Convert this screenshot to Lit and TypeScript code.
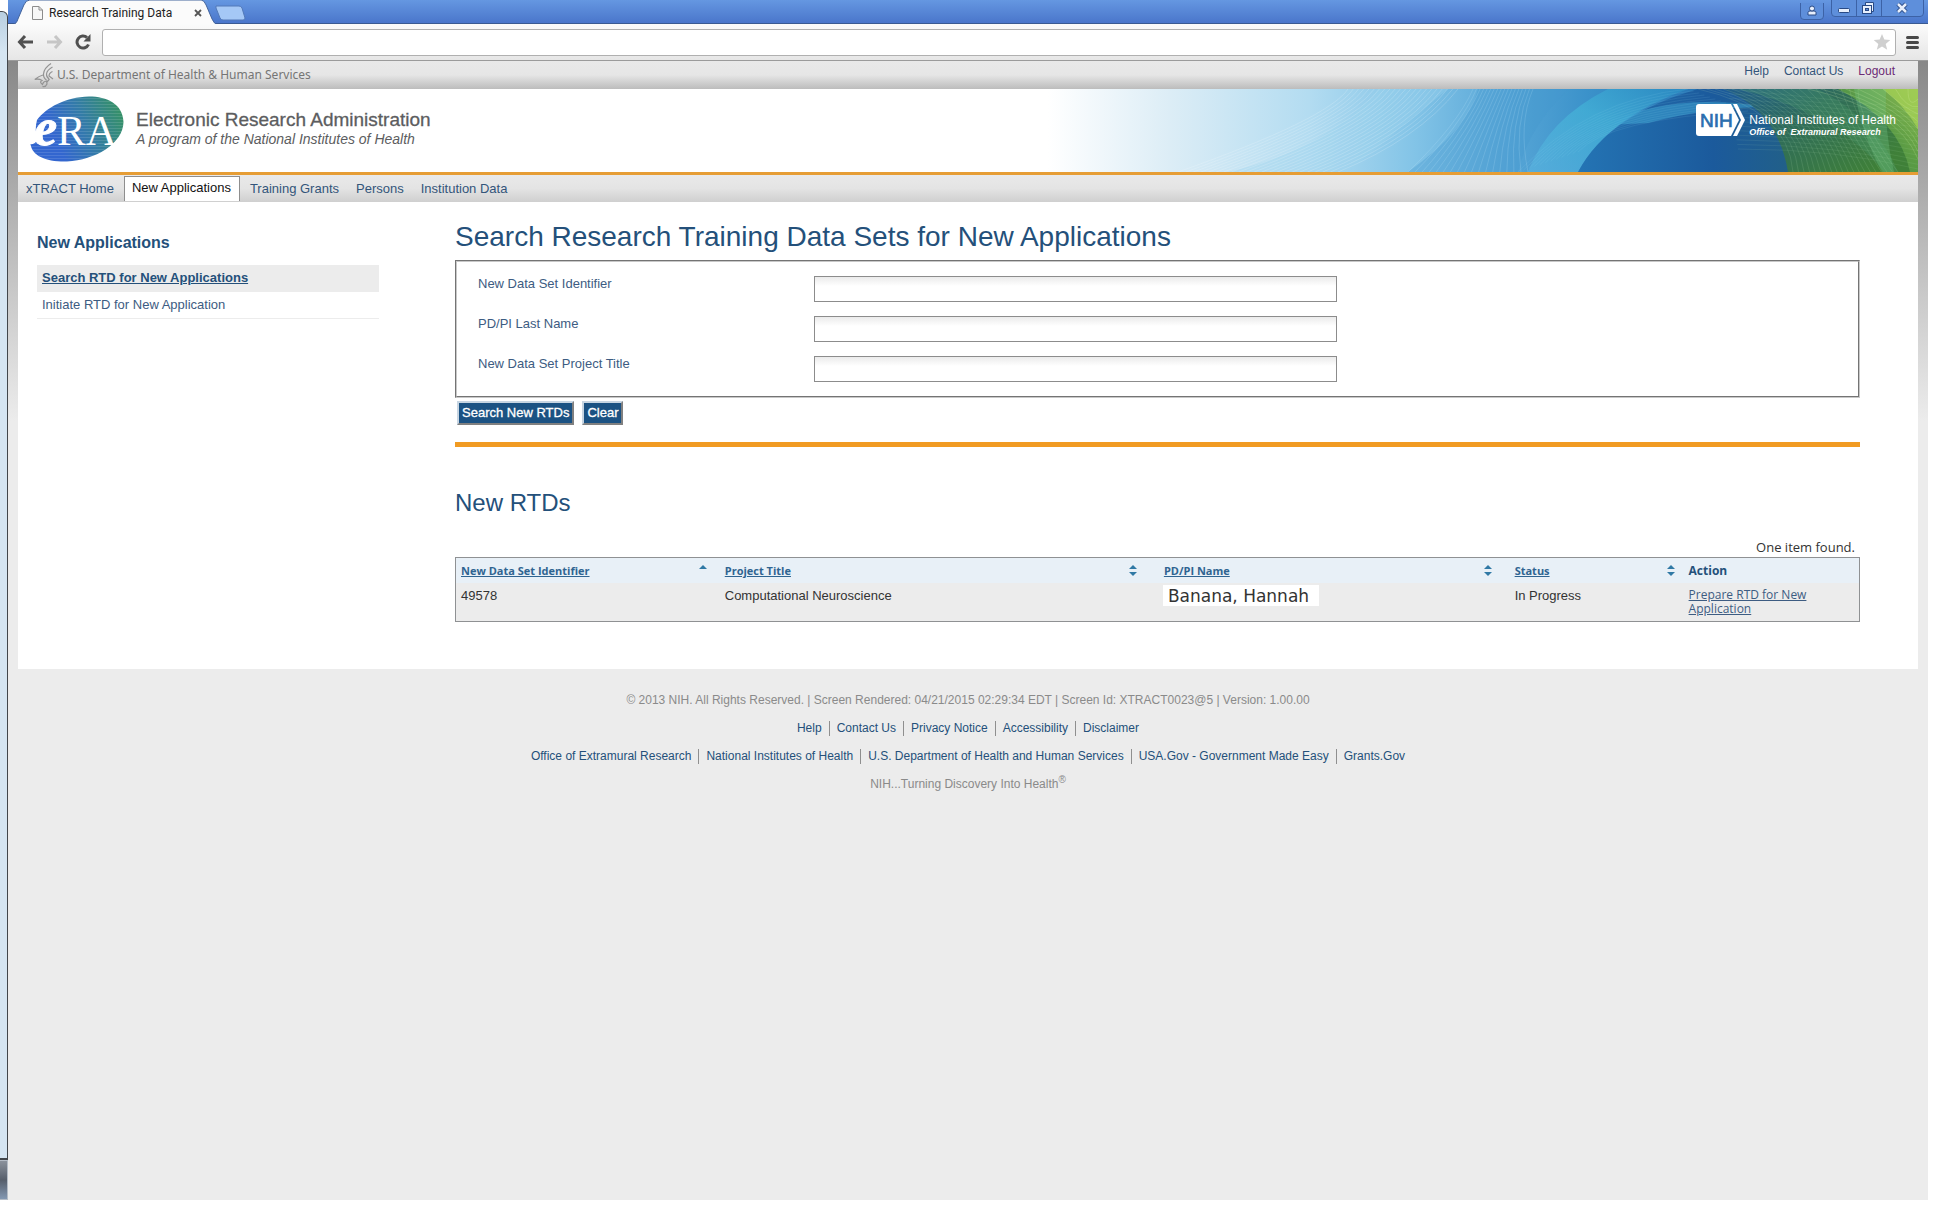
import { LitElement, html, svg, css } from "lit";
import { customElement } from "lit/decorators.js";

const sans = css`"Liberation Sans", Arial, sans-serif`;

@customElement("browser-bar")
class BrowserBar extends LitElement {
  static styles = css`
    :host { display: block; }
    button { border: 0; padding: 0; background: none; display: block; flex: none; }
    svg { display: block; }
    .strip {
      display: flex; justify-content: space-between; height: 24px; box-sizing: border-box;
      background: linear-gradient(#6597e1, #4a76cb); border-bottom: 1px solid #3a5a92;
      padding: 0 4px;
    }
    .tabs { display: flex; gap: 0; }
    .tab { position: relative; display: flex; align-items: center; width: 206px; height: 25px; box-sizing: border-box; padding: 0 16px 0 20px; z-index: 1; }
    .shape { position: absolute; inset: 0; z-index: -1; }
    .title { flex: 1; margin-left: 6px; font: 12px/16px Roboto, "Noto Sans", sans-serif; color: #222; white-space: nowrap; }
    .new { margin: 5px 0 0 -3px; align-self: flex-start; }
    .controls { display: flex; gap: 7px; }
    .tools {
      display: flex; align-items: center; height: 37px; box-sizing: border-box; padding: 0 9px;
      background: linear-gradient(#fbfbfb, #e6e6e6); border-bottom: 1px solid #9b9b9b;
    }
    .nav { display: flex; gap: 12px; margin-right: 10px; }
    .omni {
      flex: 1; display: flex; align-items: center; height: 27px; box-sizing: border-box;
      background: #fff; border: 1px solid #b0b0b0; border-radius: 3px; padding-right: 4px; margin-right: 10px;
    }
    .omni input { flex: 1; height: 23px; border: 0; outline: 0; background: none; padding: 0 6px; font: 14px ${sans}; }
  `;
  render() {
    return html`
      <div class="strip">
        <div class="tabs">
          <div class="tab">
            <svg class="shape" width="206" height="25" viewBox="0 0 208 25" preserveAspectRatio="none">
              <path d="M0 25C4 24 5 22 6 19L12 5Q14 0 18 0H191Q194 0 196 5L202 19Q204 24 208 25Z" fill="#fbfbfb" stroke="#42639b" stroke-width="1"/>
              <path d="M0 24.5H208" stroke="#fbfbfb"/>
            </svg>
            <svg width="11" height="14" viewBox="0 0 11 14"><path d="M.5.5H7L10.5 4V13.500H.5ZM7 .5V4H10.500" fill="#f7f7f7" stroke="#8c8c8c"/></svg>
            <span class="title">Research Training Data</span>
            <button aria-label="Close tab"><svg width="8" height="8" viewBox="0 0 8 8"><path d="M1 1L7 7M7 1L1 7" stroke="#555" stroke-width="1.800"/></svg></button>
          </div>
          <button class="new" aria-label="New tab"><svg width="31" height="16" viewBox="0 0 31 16"><path d="M1 1H24Q26 1 27 3L30 13Q30 15 28 15H8Q6 15 5 13L1 3Z" fill="#a5c8f6" stroke="#5279b8"/></svg></button>
        </div>
        <div class="controls">
          <button aria-label="Profile"><svg width="24" height="17" viewBox="0 0 24 17"><path d="M.5 0V13Q.5 16.500 4 16.500H20Q23.500 16.500 23.500 13V0" fill="#5e8fdb" stroke="#3c62a6"/><path d="M8 12V9.500Q8 8 10 8H14Q16 8 16 9.500V12Z" fill="#e7effc" stroke="#294a85"/><circle cx="12" cy="5.500" r="2.500" fill="#e7effc" stroke="#294a85"/></svg></button>
          <svg width="93" height="17" viewBox="0 0 93 17" role="img" aria-label="Minimize, restore, close">
            <path d="M.5 0V13Q.5 16.500 4 16.500H89Q92.500 16.500 92.500 13V0M25.500 0V16M50.500 0V16" fill="#5e8fdb" stroke="#3c62a6"/>
            <rect x="7.500" y="8.500" width="11" height="4" rx="1" fill="#e7effc" stroke="#294a85"/>
            <path d="M34.500 2.500H42.500V11.500H34.500Z" fill="#e7effc" stroke="#294a85"/><rect x="31.500" y="5.500" width="9" height="8" fill="#e7effc" stroke="#294a85"/><rect x="34.500" y="8.500" width="3" height="2" fill="#5e8fdb" stroke="#294a85"/>
            <path d="M67 4L75 12M75 4L67 12" stroke="#294a85" stroke-width="4.500"/><path d="M67 4L75 12M75 4L67 12" stroke="#e7effc" stroke-width="2.500"/>
          </svg>
        </div>
      </div>
      <div class="tools">
        <div class="nav">
          <button aria-label="Back"><svg width="17" height="16" viewBox="0 0 17 16"><path d="M8 2L2.500 8L8 14M3 8H16" fill="none" stroke="#505050" stroke-width="3"/></svg></button>
          <button aria-label="Forward"><svg width="17" height="16" viewBox="0 0 17 16"><path d="M9 2L14.500 8L9 14M14 8H1" fill="none" stroke="#c6c6c6" stroke-width="3"/></svg></button>
          <button aria-label="Reload"><svg width="17" height="16" viewBox="0 0 17 16"><path d="M13.500 10.500A6 6 0 1 1 12 3.500" fill="none" stroke="#505050" stroke-width="3"/><path d="M15.500 0V7.500H8.500Z" fill="#505050"/></svg></button>
        </div>
        <div class="omni">
          <input type="text" aria-label="Address">
          <button aria-label="Bookmark"><svg width="18" height="18" viewBox="0 0 18 18"><path d="M9 1L11.300 6.600L17.300 7L12.700 10.900L14.200 16.800L9 13.600L3.800 16.800L5.300 10.900L.7 7L6.700 6.600Z" fill="#cfcfcf"/></svg></button>
        </div>
        <button aria-label="Menu"><svg width="13" height="13" viewBox="0 0 13 13"><path d="M1.500 1.500H11.500M1.500 6.500H11.500M1.500 11.500H11.500" stroke="#484848" stroke-width="3" stroke-linecap="round"/></svg></button>
      </div>`;
  }
}

/** A fan of fine curves between two moving anchor points. */
function mesh(count: number, at: (t: number) => string, color: string, opacity: number) {
  return Array.from({ length: count }, (_, i) =>
    svg`<path d=${at(i / (count - 1))} fill="none" stroke=${color} stroke-opacity=${opacity} stroke-width=".7"/>`);
}

const OVAL = "M1.5 49C3 61 17 67 38 66.500C66 65 94 49 94.500 27C94 9 78 1.500 60 1.500C36 2 17 13 8 25Q5 36 9 44Q6 50 1.500 49Z";

@customElement("site-header")
class SiteHeader extends LitElement {
  static styles = css`
    :host { display: block; font-family: ${sans}; }
    svg { display: block; flex: none; }
    a { text-decoration: none; color: #33557a; }
    .hhs {
      display: flex; justify-content: space-between; height: 28px; box-sizing: border-box; padding: 0 23px 0 16px;
      background: linear-gradient(#e9e9e9, #e6e6e6 50%, #bcbcbc);
    }
    .dept { display: flex; align-items: center; gap: 3px; font: 12px/16px "Noto Sans", sans-serif; color: #757575; white-space: nowrap; }
    .links { display: flex; gap: 15px; font-size: 12px; line-height: 20px; }
    .links .out { color: #6b2b74; }
    .banner { position: relative; display: flex; justify-content: space-between; height: 83px; background: #fff; border-bottom: 3px solid #e69d35; overflow: hidden; }
    .art { position: absolute; right: 0; top: 0; }
    .brand { display: flex; gap: 11px; padding: 6px 0 0 11px; color: #5c5d60; white-space: nowrap; }
    .words { padding-top: 14px; }
    .name { font-size: 19px; line-height: 22px; -webkit-text-stroke: 0.3px; }
    .tag { font-size: 14px; line-height: 16px; font-style: italic; }
    .nih { position: relative; display: flex; gap: 4px; padding: 15px 22px 0 0; color: #fff; white-space: nowrap; }
    .nih .full { font-size: 12px; line-height: 14px; margin-top: 9px; }
    .nih .office { font-size: 9px; line-height: 10px; font-weight: bold; font-style: italic; }
    nav { display: flex; gap: 1px; height: 27px; background: linear-gradient(#e9e9e9, #e4e4e4 50%, #cfcfcf); font-size: 13px; }
    nav a { padding: 1px 8px 0; height: 26px; box-sizing: border-box; line-height: 25px; }
    nav .on { margin: 1px 1px 0; padding: 0 8px 0 7px; height: 25px; line-height: 22px; color: #111; background: #fff; border: 1px solid #8e8e8e; border-bottom: 0; }
  `;
  render() {
    return html`
      <div class="hhs">
        <div class="dept">
          <svg width="20" height="26" viewBox="0 0 20 26" fill="none" stroke="#939393" stroke-width="1.200">
            <path d="M17 1.500Q10 6 9.500 12Q9.300 16 12.500 18M18.500 5Q13 8 12.500 12Q12.300 15 15 17M18.500 9.500Q15 11 15 14L19 17"/>
            <path d="M9 13Q5 14 .8 17.500Q5 16.500 8 18.500Q5 20 8.500 22.500Q9 19.500 12.500 19L13 22Q11.500 25.500 8.500 24.500M15.500 17L13 20"/>
          </svg>
          <span>U.S. Department of Health &amp; Human Services</span>
        </div>
        <div class="links"><a href="#help">Help</a><a href="#contact">Contact Us</a><a class="out" href="#logout">Logout</a></div>
      </div>
      <div class="banner">
        <svg class="art" width="870" height="83" viewBox="0 0 870 83">
          <defs>
            <linearGradient id="base"><stop offset="0" stop-color="#fff"/><stop offset=".14" stop-color="#dcedf6"/><stop offset=".3" stop-color="#b3dcf1"/><stop offset=".42" stop-color="#83c4e7"/><stop offset=".52" stop-color="#5aa8d8"/><stop offset=".62" stop-color="#3b92ca"/><stop offset=".74" stop-color="#2877b6"/><stop offset="1" stop-color="#1d5f9a"/></linearGradient>
            <linearGradient id="deep"><stop offset="0" stop-color="#2474b4"/><stop offset=".5" stop-color="#1b5a9c"/><stop offset=".85" stop-color="#236184"/><stop offset="1" stop-color="#2d6b5c"/></linearGradient>
            <linearGradient id="green" x1="0" y1="0" x2="1" y2=".6"><stop offset="0" stop-color="#1f5c8c"/><stop offset=".45" stop-color="#2f6c5a"/><stop offset="1" stop-color="#3f8038"/></linearGradient>
            <linearGradient id="lime" x1="0" y1="1" x2="1" y2="0"><stop offset="0" stop-color="#468c50"/><stop offset=".55" stop-color="#5fa046"/><stop offset="1" stop-color="#9cc852"/></linearGradient>
            <linearGradient id="cyan" x1="0" y1="1" x2="1" y2="0"><stop offset="0" stop-color="#5ab4e0"/><stop offset=".55" stop-color="#45b9da"/><stop offset="1" stop-color="#2b93c8"/></linearGradient>
          </defs>
          <rect width="870" height="83" fill="url(#base)"/>
          <path d="M330 0H400Q350 40 300 83H180Q280 60 330 0Z" fill="#9fd3ee" opacity=".35"/>
          <path d="M430 0H520Q480 40 470 83H360Q420 40 430 0Z" fill="#4497cf" opacity=".35"/>
          <path d="M510 0H640Q560 28 530 83H480Q500 30 560 0Z" fill="url(#cyan)" opacity=".6"/>
          <path d="M530 83Q560 26 650 0H740L800 83Z" fill="url(#deep)"/>
          <path d="M560 36Q620 2 720 18Q660 18 600 34Z" fill="#3ea5d3" opacity=".5"/>
          <path d="M675 0Q730 22 740 83H870V0Z" fill="url(#green)"/>
          <path d="M690 0H770Q828 30 850 83H836Q790 24 690 0Z" fill="#4b9b6c" opacity=".3"/>
          <path d="M790 0H870V83H862Q852 32 790 0Z" fill="url(#lime)" opacity=".85"/>
          <path d="M835 0H870V40Q856 16 835 0Z" fill="#a5d155" opacity=".75"/>
          <path d="M806 0Q814 46 834 83H846Q836 40 838 0Z" fill="#77c98a" opacity=".3"/>
          ${mesh(22, (t) => `M${300 + t * 110} 0Q${280 + t * 90} ${30 + t * 20} ${130 + t * 160} 83`, "#fff", 0.25)}
          ${mesh(18, (t) => `M${425 + t * 60} 0Q${410 + t * 60} 35 ${360 + t * 120} 83`, "#cdefff", 0.25)}
          ${mesh(12, (t) => `M${470 + t * 60} ${83 - t * 20}Q${540 + t * 20} ${10 + t * 20} ${640 + t * 60} ${t * 22}`, "#9be4f5", 0.15)}
          ${mesh(20, (t) => `M${650 + t * 160} 0Q${740 + t * 70} ${20 + t * 10} ${745 + t * 105} 83`, "#c8f0c8", 0.18)}
          ${mesh(14, (t) => `M${680 + t * 10} ${t * 60}Q${780 + t * 10} ${10 + t * 50} 870 ${20 + t * 60}`, "#c8f0c8", 0.13)}
          ${mesh(9, (t) => `M${760 + t * 100} 0Q${850 + t * 10} 20 870 ${70 - t * 60}`, "#e8ffb8", 0.25)}
        </svg>
        <div class="brand">
          <svg width="96" height="70" viewBox="0 0 96 70" role="img" aria-label="eRA">
            <defs>
              <linearGradient id="oval" x1="0" y1=".3" x2="1" y2="0"><stop offset="0.150" stop-color="#3366cf"/><stop offset=".5" stop-color="#337ba8"/><stop offset="1" stop-color="#36955a"/></linearGradient>
              <pattern id="scan" width="4" height="3" patternUnits="userSpaceOnUse"><rect width="4" height="1" fill="#fff" opacity=".12"/></pattern>
            </defs>
            <path d=${OVAL} fill="url(#oval)"/>
            <path d=${OVAL} fill="url(#scan)"/>
            <text x="5" y="50" font-family="Liberation Serif, serif" fill="#fff"><tspan font-size="52" font-weight="bold" font-style="italic" stroke="#fff" stroke-width="1">e</tspan><tspan font-size="43">RA</tspan></text>
          </svg>
          <div class="words">
            <div class="name">Electronic Research Administration</div>
            <div class="tag">A program of the National Institutes of Health</div>
          </div>
        </div>
        <div class="nih">
          <svg width="49" height="32" viewBox="0 0 49 32" role="img" aria-label="NIH">
            <path d="M3 0H35L43 16L35 32H3Q0 32 0 29V3Q0 0 3 0Z" fill="#fff"/>
            <path d="M37 0H41L49 16L41 32H37L45 16Z" fill="#fff"/>
            <text x="4" y="23" font-family="Liberation Sans, sans-serif" font-size="19" fill="#2b6fae" stroke="#2b6fae" stroke-width=".7">NIH</text>
          </svg>
          <div>
            <div class="full">National Institutes of Health</div>
            <div class="office">Office of&nbsp; Extramural Research</div>
          </div>
        </div>
      </div>
      <nav>
        <a href="#home">xTRACT Home</a><a class="on" href="#new">New Applications</a><a href="#grants">Training Grants</a><a href="#persons">Persons</a><a href="#institution">Institution Data</a>
      </nav>`;
  }
}

const FIELDS = [
  ["identifier", "New Data Set Identifier"],
  ["lastname", "PD/PI Last Name"],
  ["title", "New Data Set Project Title"],
];

@customElement("search-page")
class SearchPage extends LitElement {
  static styles = css`
    :host {
      display: grid; grid-template-columns: minmax(0, 342fr) minmax(0, 1405fr); gap: 76px; background: #fff;
      padding: 18px 58px 47px 19px; font: 13px/16px ${sans}; color: #24507a;
    }
    h1, h2, h3 { margin: 0; font-weight: normal; color: #24507a; }
    a { color: #3d5c82; }
    aside h3 { font-size: 16px; font-weight: bold; line-height: 20px; margin: 13px 0 12px; }
    aside a { display: block; height: 26px; line-height: 26px; padding-left: 5px; text-decoration: none; border-bottom: 1px solid #ececec; color: #3d5c82; }
    aside .on { background: #ececec; font-weight: bold; text-decoration: underline; color: #24507a; }
    h1 { font-size: 28px; line-height: 34px; margin-bottom: 6px; }
    .box { display: grid; gap: 14px; border: 2px groove #c8c8c8; padding: 14px 0 14px 21px; }
    .field { display: grid; grid-template-columns: 336fr 523fr 521fr; height: 26px; }
    .field label { line-height: 16px; color: #3d5c82; }
    .field input {
      box-sizing: border-box; width: 100%; height: 26px; border: 1px solid #8c8c8c; border-radius: 0; outline: 0; padding: 2px 6px;
      font: 13px ${sans}; background: linear-gradient(#ebebeb, #fff 9px);
    }
    .actions { display: flex; gap: 8px; margin: 3px 2px 17px; }
    .actions button {
      height: 24px; box-sizing: border-box; padding: 0 3px; border: 2px solid; border-color: #c7d5e2 #808080 #808080 #c7d5e2;
      background: #1b5283; color: #fff; font: 13px/16px ${sans}; -webkit-text-stroke: 0.3px;
    }
    .rule { height: 5px; background: #f19b22; }
    h2 { font-size: 24px; line-height: 30px; margin-top: 41px; }
    .found { text-align: right; padding-right: 5px; margin: 21px 0 2px; font: 13px/16px "Open Sans", sans-serif; color: #333; }
    table { width: 100%; table-layout: fixed; border-collapse: separate; border-spacing: 0; border: 1px solid #8f9193; }
    col.a { width: 18.8%; } col.b { width: 31.3%; } col.c { width: 25%; } col.d { width: 12.4%; }
    th { padding: 5px 0 5px 5px; background: #e8f0f7; text-align: left; font: bold 12px/15px "Open Sans", sans-serif; }
    th div { display: flex; justify-content: space-between; align-items: center; padding-right: 5%; }
    th a { font-size: 11px; color: #2f6491; }
    th svg { display: block; }
    td { height: 38px; box-sizing: border-box; padding: 5px 0 4px 5px; vertical-align: top; background: #ececec; color: #333; }
    td.act { font: 12px/14px "Open Sans", sans-serif; padding-right: 30px; }
    td.who { padding-left: 4px; padding-top: 2px; }
    .name { display: inline-block; background: #fff; padding: 2px 10px 1px 5px; font: 17px/18px "DejaVu Sans", sans-serif; }
  `;
  private head(label: string, up: boolean, down: boolean) {
    return html`<th><div><a href="#sort">${label}</a><svg width="8" height="11" viewBox="0 0 8 11" fill="#3079a5">
      ${up ? svg`<path d="M4 0L8 4H0Z"/>` : ""}${down ? svg`<path d="M4 11L0 7H8Z"/>` : ""}</svg></div></th>`;
  }
  render() {
    return html`
      <aside>
        <h3>New Applications</h3>
        <a class="on" href="#search">Search RTD for New Applications</a>
        <a href="#initiate">Initiate RTD for New Application</a>
      </aside>
      <main>
        <h1>Search Research Training Data Sets for New Applications</h1>
        <div class="box">
          ${FIELDS.map(([id, label]) => html`<div class="field"><label for=${id}>${label}</label><input id=${id} type="text"></div>`)}
        </div>
        <div class="actions"><button>Search New RTDs</button><button>Clear</button></div>
        <div class="rule"></div>
        <h2>New RTDs</h2>
        <div class="found">One item found.</div>
        <table>
          <colgroup><col class="a"><col class="b"><col class="c"><col class="d"><col></colgroup>
          <thead><tr>
            ${this.head("New Data Set Identifier", true, false)}
            ${this.head("Project Title", true, true)}
            ${this.head("PD/PI Name", true, true)}
            ${this.head("Status", true, true)}
            <th>Action</th>
          </tr></thead>
          <tbody><tr>
            <td>49578</td><td>Computational Neuroscience</td>
            <td class="who"><span class="name">Banana, Hannah</span></td>
            <td>In Progress</td>
            <td class="act"><a href="#prepare">Prepare RTD for New Application</a></td>
          </tr></tbody>
        </table>
      </main>`;
  }
}

@customElement("site-footer")
class SiteFooter extends LitElement {
  static styles = css`
    :host { display: block; padding: 17px 0; text-align: center; font: 12px/28px ${sans}; color: #8a8a8a; }
    .row { display: flex; justify-content: center; align-items: center; height: 28px; }
    a { color: #24507a; text-decoration: none; line-height: 15px; padding: 0 7px; border-left: 1px solid #8f8f8f; }
    a:first-child { border-left: 0; }
    sup { font-size: 10px; line-height: 0; }
  `;
  private row(items: string[]) {
    return html`<div class="row">${items.map((t) => html`<a href="#link">${t}</a>`)}</div>`;
  }
  render() {
    return html`
      <div>© 2013 NIH. All Rights Reserved. | Screen Rendered: 04/21/2015 02:29:34 EDT | Screen Id: XTRACT0023@5 | Version: 1.00.00</div>
      ${this.row(["Help", "Contact Us", "Privacy Notice", "Accessibility", "Disclaimer"])}
      ${this.row(["Office of Extramural Research", "National Institutes of Health", "U.S. Department of Health and Human Services", "USA.Gov - Government Made Easy", "Grants.Gov"])}
      <div>NIH...Turning Discovery Into Health<sup>®</sup></div>`;
  }
}

@customElement("app-root")
export class AppRoot extends LitElement {
  static styles = css`
    :host { display: flex; min-height: 100vh; box-sizing: border-box; padding: 0 14px 20px 0; background: #fff; }
    .desktop { display: flex; flex-direction: column; width: 8px; flex: none; padding-top: 11px; box-sizing: border-box; }
    .pane { flex: 1; box-sizing: border-box; background: linear-gradient(#b9cfe0, #d5e5f2 40px, #d5e5f2); border: solid #42464b; border-width: 1px 1px 2px 0; border-top-right-radius: 6px; }
    .taskbar { height: 40px; box-sizing: border-box; background: linear-gradient(#8b929c, #565e6b 50%, #8398b2); border: solid #b4bcc6; border-width: 1px 1px 1px 0; }
    .window { flex: 1; min-width: 0; display: flex; flex-direction: column; background: #ececec; }
    .page { flex: 1; padding: 0 10px; background: linear-gradient(#888, #ececec 360px); }
  `;
  render() {
    return html`
      <div class="desktop"><div class="pane"></div><div class="taskbar"></div></div>
      <div class="window">
        <browser-bar></browser-bar>
        <div class="page">
          <site-header></site-header>
          <search-page></search-page>
          <site-footer></site-footer>
        </div>
      </div>`;
  }
}
